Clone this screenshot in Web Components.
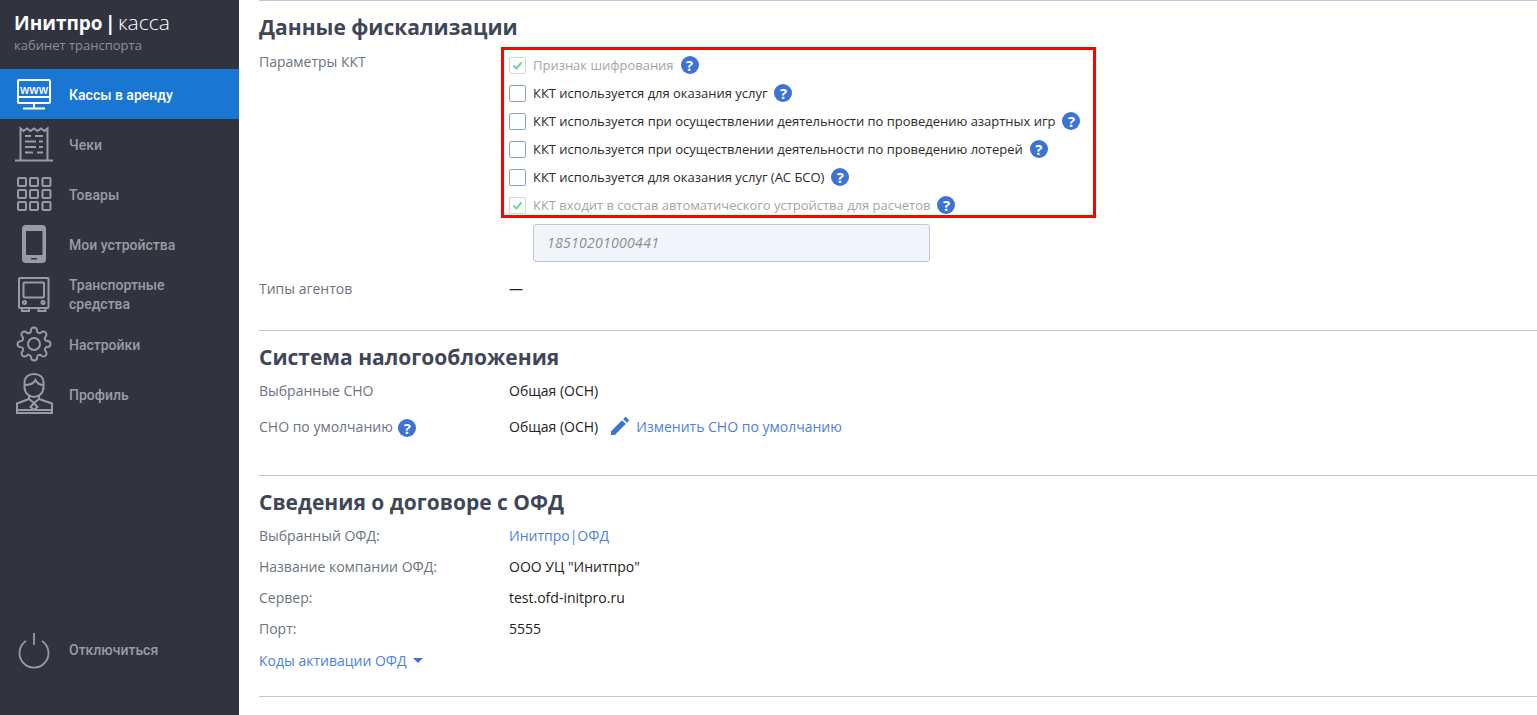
<!DOCTYPE html>
<html lang="ru">
<head>
<meta charset="UTF-8">
<title>Инитпро | касса</title>
<style>
  html, body { margin: 0; height: 100%; overflow: hidden; background: #fff; }
  body { font-family: "Open Sans", sans-serif; }
  app-shell svg { display: block; }
</style>
</head>
<body>
<app-shell>
  <side-bar slot="side">
    <nav-item active label="Кассы в аренду">
      <svg slot="icon" width="69" height="50" viewBox="0 0 69 50" fill="none" stroke="#fff" stroke-width="2">
        <rect x="18" y="11" width="32" height="23" rx="1"/>
        <path d="M18 28h32M34 34v5M23 39.500h22"/>
        <text x="34" y="24.500" text-anchor="middle" fill="#fff" stroke="none" font-family="Open Sans" font-size="12" font-weight="600" textLength="28" lengthAdjust="spacingAndGlyphs">www</text>
      </svg>
    </nav-item>
    <nav-item label="Чеки">
      <svg slot="icon" width="69" height="50" viewBox="0 0 69 50" fill="none" stroke="#9a9ca3" stroke-width="2">
        <path d="M20.500 41V9.500l3 2.500 3.500-2.500 3.500 2.500 3.500-2.500 3.500 2.500 3.500-2.500 3.500 2.500 3-2.500V41M15 41.500h38"/>
        <path d="M25 17h6M35 17h8M25 22.500h11M39 22.500h4M25 28h11M39 28h4M25 33.500h8M37 33.500h6"/>
      </svg>
    </nav-item>
    <nav-item label="Товары">
      <svg slot="icon" width="69" height="50" viewBox="0 0 69 50" fill="none" stroke="#9a9ca3" stroke-width="2">
        <rect x="18" y="9" width="8" height="8" rx="1"/><rect x="30" y="9" width="8" height="8" rx="1"/><rect x="42.500" y="9" width="8" height="8" rx="1"/>
        <rect x="18" y="21" width="8" height="8" rx="1"/><rect x="30" y="21" width="8" height="8" rx="1"/><rect x="42.500" y="21" width="8" height="8" rx="1"/>
        <rect x="18" y="33" width="8" height="8" rx="1"/><rect x="30" y="33" width="8" height="8" rx="1"/><rect x="42.500" y="33" width="8" height="8" rx="1"/>
      </svg>
    </nav-item>
    <nav-item label="Мои устройства">
      <svg slot="icon" width="69" height="50" viewBox="0 0 69 50">
        <rect x="22" y="6" width="24" height="38" rx="4" fill="#9a9ca3"/>
        <rect x="26" y="12" width="16.500" height="24" fill="#31343f"/>
        <rect x="31" y="39" width="6" height="1.500" fill="#31343f"/>
      </svg>
    </nav-item>
    <nav-item label="Транспортные средства">
      <svg slot="icon" width="69" height="50" viewBox="0 0 69 50" fill="none" stroke="#9a9ca3" stroke-width="2">
        <rect x="19" y="9" width="29.500" height="30" rx="1"/>
        <rect x="23.500" y="13.500" width="20.500" height="15" rx="1"/>
        <circle cx="24.500" cy="33.500" r="1.500"/><circle cx="43" cy="33.500" r="1.500"/>
        <path d="M22 39v3h7v-3M38.500 39v3h7v-3"/>
      </svg>
    </nav-item>
    <nav-item label="Настройки">
      <svg slot="icon" width="69" height="50" viewBox="0 0 69 50" fill="none" stroke="#9a9ca3">
        <g transform="translate(16 7) scale(1.5)" stroke-width="1.300">
          <circle cx="12" cy="12" r="4"/>
          <path d="M19.400 15a1.650 1.650 0 0 0 .33 1.820l.06.06a2 2 0 0 1 0 2.830 2 2 0 0 1-2.830 0l-.06-.06a1.650 1.650 0 0 0-1.820-.33 1.650 1.650 0 0 0-1 1.510V21a2 2 0 0 1-2 2 2 2 0 0 1-2-2v-.09A1.650 1.650 0 0 0 9 19.400a1.650 1.650 0 0 0-1.820.33l-.06.06a2 2 0 0 1-2.830 0 2 2 0 0 1 0-2.830l.06-.06a1.650 1.650 0 0 0 .33-1.820 1.650 1.650 0 0 0-1.510-1H3a2 2 0 0 1-2-2 2 2 0 0 1 2-2h.09A1.650 1.650 0 0 0 4.600 9a1.650 1.650 0 0 0-.33-1.820l-.06-.06a2 2 0 0 1 0-2.830 2 2 0 0 1 2.830 0l.06.06a1.650 1.650 0 0 0 1.820.33H9a1.650 1.650 0 0 0 1-1.510V3a2 2 0 0 1 2-2 2 2 0 0 1 2 2v.09a1.650 1.650 0 0 0 1 1.510 1.650 1.650 0 0 0 1.820-.33l.06-.06a2 2 0 0 1 2.830 0 2 2 0 0 1 0 2.830l-.06.06a1.650 1.650 0 0 0-.33 1.820V9a1.650 1.650 0 0 0 1.510 1H21a2 2 0 0 1 2 2 2 2 0 0 1-2 2h-.09a1.650 1.650 0 0 0-1.510 1z"/>
        </g>
      </svg>
    </nav-item>
    <nav-item label="Профиль">
      <svg slot="icon" width="69" height="50" viewBox="0 0 69 50" fill="none" stroke="#9a9ca3" stroke-width="2">
        <path d="M24.500 14c0-6 4-9 9.500-9s9.500 3 9.500 9v4c0 6-4.500 10-9.500 10s-9.500-4-9.500-10z"/>
        <path d="M24.500 16c5 0 9-1 11-5 1.500 3 4 5 8 5"/>
        <path d="M29 27v3l-12 4.500V44h35V34.500L39 30v-3"/>
        <path d="M29 30l5 4 5-4M34 34l-3.500 4 3.500 3 3.500-3zM17 41h35"/>
      </svg>
    </nav-item>
    <nav-item slot="bottom" label="Отключиться">
      <svg slot="icon" width="69" height="50" viewBox="0 0 69 50" fill="none" stroke="#9a9ca3" stroke-width="1.800">
        <path d="M26 17a14.500 14.500 0 1 0 16 0M34 9v12"/>
      </svg>
    </nav-item>
  </side-bar>

  <form-section title="Данные фискализации">
    <field-row label="Параметры ККТ" variant="checks">
      <check-list>
        <kkt-check checked disabled>Признак шифрования</kkt-check>
        <kkt-check>ККТ используется для оказания услуг</kkt-check>
        <kkt-check>ККТ используется при осуществлении деятельности по проведению азартных игр</kkt-check>
        <kkt-check>ККТ используется при осуществлении деятельности по проведению лотерей</kkt-check>
        <kkt-check>ККТ используется для оказания услуг (АС БСО)</kkt-check>
        <kkt-check checked disabled>ККТ входит в состав автоматического устройства для расчетов</kkt-check>
      </check-list>
      <text-box>18510201000441</text-box>
    </field-row>
    <field-row label="Типы агентов" style="--row-top:15px;--row-h:22px">—</field-row>
  </form-section>

  <form-section title="Система налогообложения" style="--sec-h:145px">
    <field-row label="Выбранные СНО" style="--row-h:22px;--row-top:8px">Общая (ОСН)</field-row>
    <field-row style="--row-h:22px;--row-top:14px">
      <span slot="label" style="padding-top:2px">СНО по умолчанию <help-mark style="margin-left:2px"></help-mark></span>
      <div style="display:flex;align-items:center">
        Общая (ОСН)
        <svg width="24" height="24" viewBox="0 0 24 24" fill="#3d72d6" style="margin:-1px 4px -1px 10px"><path d="M3 17.250V21h3.750L17.810 9.940l-3.750-3.750L3 17.250zM20.710 7.040a1 1 0 0 0 0-1.410l-2.340-2.340a1 1 0 0 0-1.410 0l-1.830 1.830 3.750 3.750 1.830-1.830z"/></svg>
        <link-text>Изменить СНО по умолчанию</link-text>
      </div>
    </field-row>
  </form-section>

  <form-section title="Сведения о договоре с ОФД" style="--sec-h:222px;border-bottom:1px solid #b7cbe0">
    <field-row label="Выбранный ОФД:" style="--row-h:22px;--row-top:8px"><link-text>Инитпро|ОФД</link-text></field-row>
    <field-row label="Название компании ОФД:" style="--row-h:22px;--row-top:9px">ООО УЦ "Инитпро"</field-row>
    <field-row label="Сервер:" style="--row-h:22px;--row-top:9px">test.ofd-initpro.ru</field-row>
    <field-row label="Порт:" style="--row-h:22px;--row-top:9px">5555</field-row>
    <div style="margin-top:10px;height:22px;display:flex;align-items:center;font-size:14px">
      <link-text>Коды активации ОФД</link-text>
      <svg width="10" height="5" viewBox="0 0 10 5" fill="#3d72d6" style="margin-left:6px"><path d="M0 0h10L5 5z"/></svg>
    </div>
  </form-section>
</app-shell>

<script>
  // shell: sidebar on the left, sections on the right
  class AppShell extends HTMLElement {
    constructor() {
      super();
      this.attachShadow({ mode: 'open' });
      this.shadowRoot.innerHTML = `
        <style>
          :host { display: flex; height: 715px; overflow: hidden; }
          main { flex: 1; min-width: 0; padding-left: 20px; }
        </style>
        <slot name="side"></slot>
        <main><slot></slot></main>
      `;
    }
  }

  class SideBar extends HTMLElement {
    constructor() {
      super();
      this.attachShadow({ mode: 'open' });
      this.shadowRoot.innerHTML = `
        <style>
          :host { display: flex; flex-direction: column; width: 239px; flex: none; background: #31343f; }
          .logo { height: 69px; box-sizing: border-box; padding: 8px 0 0 14px; color: #fff; }
          .name { font-size: 19px; line-height: 28px; font-weight: 700; word-spacing: -2.5px; }
          .name span { font-size: 21px; font-weight: 300; }
          .sub { font-size: 13px; line-height: 16px; color: #8d8f96; }
          .bottom { margin-top: auto; padding-bottom: 41px; }
        </style>
        <div class="logo">
          <div class="name">Инитпро | <span>касса</span></div>
          <div class="sub">кабинет транспорта</div>
        </div>
        <slot></slot>
        <div class="bottom"><slot name="bottom"></slot></div>
      `;
    }
  }

  class NavItem extends HTMLElement {
    constructor() {
      super();
      this.attachShadow({ mode: 'open' });
      this.shadowRoot.innerHTML = `
        <style>
          :host { display: flex; align-items: center; height: 50px; color: #9a9ca3; font: 500 14px/19px Roboto, sans-serif; }
          :host([active]) { background: #1976d2; color: #fff; }
          .label { width: 125px; padding-top: 2px; }
        </style>
        <slot name="icon"></slot>
        <div class="label"></div>
      `;
    }

    connectedCallback() {
      this.shadowRoot.querySelector('.label').textContent = this.getAttribute('label');
    }
  }

  class FormSection extends HTMLElement {
    constructor() {
      super();
      this.attachShadow({ mode: 'open' });
      this.shadowRoot.innerHTML = `
        <style>
          :host { display: block; height: var(--sec-h, 330px); box-sizing: border-box; border-top: 1px solid #b7cbe0; }
          h2 { margin: 0; font-size: 21px; line-height: 27px; padding-top: 13px; font-weight: 700; color: #3f4756; }
        </style>
        <h2></h2>
        <slot></slot>
      `;
    }

    connectedCallback() {
      this.shadowRoot.querySelector('h2').textContent = this.getAttribute('title');
    }
  }

  class FieldRow extends HTMLElement {
    constructor() {
      super();
      this.attachShadow({ mode: 'open' });
      this.shadowRoot.innerHTML = `
        <style>
          :host { display: grid; grid-template-columns: 250px 1fr; margin-top: var(--row-top, 0); font-size: 14px; color: #222; }
          .label { color: #6b7480; min-height: var(--row-h, 22px); display: flex; align-items: center; }
          .label.checks { align-self: start; margin-top: 9px; }
          .value { min-height: var(--row-h, 22px); display: flex; flex-direction: column; justify-content: center; }
        </style>
        <div class="label"><slot name="label"></slot></div>
        <div class="value"><slot></slot></div>
      `;
    }

    connectedCallback() {
      const label = this.shadowRoot.querySelector('.label');
      if (this.hasAttribute('label')) label.textContent = this.getAttribute('label');
      if (this.getAttribute('variant') === 'checks') label.classList.add('checks');
    }
  }

  // the list with the red frame round it
  class CheckList extends HTMLElement {
    constructor() {
      super();
      this.attachShadow({ mode: 'open' });
      this.shadowRoot.innerHTML = `
        <style>
          :host { display: block; width: 595px; box-sizing: border-box; margin: 6px 0 6px -8px; padding: 1px 0 0 5px; border: 3px solid #f00; height: 171px; }
        </style>
        <slot></slot>
      `;
    }
  }

  class KktCheck extends HTMLElement {
    constructor() {
      super();
      this.attachShadow({ mode: 'open' });
      this.shadowRoot.innerHTML = `
        <style>
          :host { display: flex; align-items: center; height: 28px; font-size: 13px; color: #2b2b2b; letter-spacing: -.015px; }
          :host([disabled]) { color: #a3a5a8; }
          .box { flex: none; width: 17px; height: 17px; box-sizing: border-box; border: 1px solid #8ea4c6; border-radius: 2px; margin-right: 7px; display: flex; align-items: center; justify-content: center; }
          :host([disabled]) .box { border-color: #cfd6e2; }
          svg { display: none; }
          :host([checked]) svg { display: block; }
          help-mark { margin-left: 7px; }
        </style>
        <div class="box"><svg width="11" height="9" viewBox="0 0 11 9" fill="none" stroke="#7fd19a" stroke-width="2"><path d="M1.500 4.500l3 3 5-6"/></svg></div>
        <span><slot></slot></span>
        <help-mark></help-mark>
      `;
    }
  }

  class HelpMark extends HTMLElement {
    constructor() {
      super();
      this.attachShadow({ mode: 'open' });
      this.shadowRoot.innerHTML = `
        <style>
          :host { display: inline-flex; width: 18px; height: 18px; border-radius: 50%; background: #3d72d6; color: #fff; align-items: center; justify-content: center; font: 700 15px/18px "Open Sans", sans-serif; vertical-align: middle; }
        </style>
        ?
      `;
    }
  }

  class TextBox extends HTMLElement {
    constructor() {
      super();
      this.attachShadow({ mode: 'open' });
      this.shadowRoot.innerHTML = `
        <style>
          :host { display: flex; align-items: center; box-sizing: border-box; width: 397px; height: 38px; margin-left: 24px; padding: 0 0 1px 13px; background: #f1f4f9; border: 1px solid #b9c9de; border-radius: 3px; font-size: 14px; font-style: italic; letter-spacing: .3px; color: #8a8d92; }
        </style>
        <slot></slot>
      `;
    }
  }

  class LinkText extends HTMLElement {
    constructor() {
      super();
      this.attachShadow({ mode: 'open' });
      this.shadowRoot.innerHTML = `
        <style>
          :host { display: inline; color: #4d7fdc; cursor: pointer; }
        </style>
        <slot></slot>
      `;
    }
  }

  customElements.define('app-shell', AppShell);
  customElements.define('side-bar', SideBar);
  customElements.define('nav-item', NavItem);
  customElements.define('form-section', FormSection);
  customElements.define('field-row', FieldRow);
  customElements.define('check-list', CheckList);
  customElements.define('kkt-check', KktCheck);
  customElements.define('help-mark', HelpMark);
  customElements.define('text-box', TextBox);
  customElements.define('link-text', LinkText);
</script>
</body>
</html>
